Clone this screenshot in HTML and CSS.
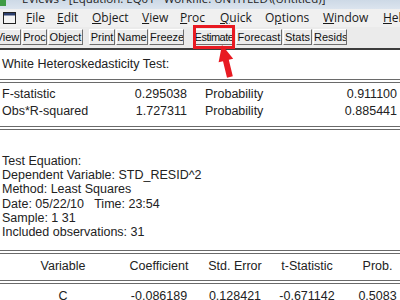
FILE: index.html
```html
<!DOCTYPE html>
<html>
<head>
<meta charset="utf-8">
<link rel="stylesheet" href="styles.css">
</head>
<body>
<div class="app">
  <div class="titlebar">
    <span class="appicon"></span>
    <span class="title">EViews - [Equation: EQ01 &nbsp; Workfile: UNTITLED\(Untitled)]</span>
  </div>
  <div class="menubar">
    <span class="sysicon"><svg width="13" height="12" viewBox="0 0 13 12"><rect x="0.5" y="0.5" width="12" height="11" fill="#f4f4f4" stroke="#222"/><rect x="1" y="1" width="11" height="2.5" fill="#2c3f6e"/></svg></span>
    <span><u>F</u>ile</span>
    <span><u>E</u>dit</span>
    <span><u>O</u>bject</span>
    <span><u>V</u>iew</span>
    <span><u>P</u>roc</span>
    <span><u>Q</u>uick</span>
    <span>O<u>p</u>tions</span>
    <span><u>W</u>indow</span>
    <span><u>H</u>elp</span>
  </div>
  <div class="toolbar">
    <div class="tgroup g1">
      <span class="btn b-view">View</span>
      <span class="btn b-proc">Proc</span>
      <span class="btn b-object">Object</span>
    </div>
    <div class="tgroup g2">
      <span class="btn b-print">Print</span>
      <span class="btn b-name">Name</span>
      <span class="btn b-freeze">Freeze</span>
    </div>
    <div class="tgroup g3">
      <span class="btn b-estimate">Estimate</span>
      <span class="btn b-forecast">Forecast</span>
      <span class="btn b-stats">Stats</span>
      <span class="btn b-resids">Resids</span>
    </div>
  </div>
  <div class="output">
    <div class="hdr">White Heteroskedasticity Test:</div>
    <div class="rule r1"></div>
    <div class="stats">
      <span>F-statistic</span><span class="num">0.295038</span><span></span><span>Probability</span><span class="num">0.911100</span>
      <span>Obs*R-squared</span><span class="num">1.727311</span><span></span><span>Probability</span><span class="num">0.885441</span>
    </div>
    <div class="rule r2"></div>
    <div class="info">
      <div>Test Equation:</div>
      <div>Dependent Variable: STD_RESID^2</div>
      <div>Method: Least Squares</div>
      <div>Date: 05/22/10 &nbsp; Time: 23:54</div>
      <div>Sample: 1 31</div>
      <div>Included observations: 31</div>
    </div>
    <div class="rule r3"></div>
    <div class="coef chead">
      <span>Variable</span><span>Coefficient</span><span>Std. Error</span><span>t-Statistic</span><span>Prob.</span>
    </div>
    <div class="rule r4"></div>
    <div class="coef crow">
      <span>C</span><span>-0.086189</span><span>0.128421</span><span>-0.671142</span><span>0.5083</span>
    </div>
  </div>
  <div class="redbox"></div>
  <svg class="arrow" width="400" height="300" viewBox="0 0 400 300"><polygon points="222,45 233.2,58.7 228.8,59.8 232.8,76.3 227,77.7 223,61.2 218.6,62.3" fill="#e81a22"/></svg>
</div>
</body>
</html>
```
FILE: styles.css
```css
* { box-sizing: border-box; }
html, body { margin: 0; padding: 0; background: #fff; }
body { width: 400px; height: 300px; overflow: hidden; }
.app { position: relative; width: 400px; height: 300px; overflow: hidden; background: #fff; }

.titlebar { height: 9px; display: flex; overflow: hidden; background: linear-gradient(#cdd9e6, #dbe4ee); }
.appicon { width: 6px; height: 6px; background: #3f9b45; flex: none; }
.title { margin-left: 16px; margin-top: -9px; font: 11.5px/16px "Open Sans", sans-serif; color: #222; white-space: nowrap; }

.menubar { height: 18px; display: grid; grid-template-columns: 26px 31px 35px 50px 38px 40px 45px 58px 60px auto; align-items: center; background: #f0f0f0; font: 12px/18px "Open Sans", sans-serif; color: #1a1a1a; white-space: nowrap; }
.sysicon { padding-left: 3px; display: flex; align-items: center; }

.toolbar { height: 23px; padding-top: 2px; display: flex; align-items: flex-start; background: #ebebeb; border-bottom: 2px solid #3d3d3d; }
.tgroup { display: flex; gap: 1px; }
.g1 { margin-left: -6px; }
.g2 { margin-left: 6px; }
.g3 { margin-left: 9px; }
.btn { height: 16px; border: 1px solid; border-color: #fff #6e6e6e #6e6e6e #fff; background: #ececec; font: 11px/14px "Liberation Sans", Arial, sans-serif; color: #111; text-align: center; white-space: nowrap; overflow: hidden; }
.b-view { width: 27px; }
.b-proc { width: 25px; }
.b-object { width: 35px; }
.b-print { width: 26px; }
.b-name { width: 32px; }
.b-freeze { width: 35px; }
.b-estimate { width: 42px; letter-spacing: -0.5px; overflow: visible; }
.b-forecast { width: 46px; }
.b-stats { width: 29px; }
.b-resids { width: 34px; }

.output { padding: 6px 0 0 2px; font: 12.5px "Liberation Sans", Arial, sans-serif; color: #222; }
.hdr { line-height: 16px; }
.rule { height: 4px; margin-left: -2px; border-top: 1px solid #6a6a6a; border-bottom: 1px solid #6a6a6a; }
.r1 { margin-top: 7px; }
.r2 { margin-top: 6px; }
.r3 { margin-top: 11px; }
.r4 { margin-top: 6.3px; }
.stats { margin-top: 3px; display: grid; grid-template-columns: 118px 67px 18px 110px 82px; line-height: 17px; }
.num { text-align: right; }
.info { margin-top: 24px; line-height: 14.2px; }
.coef { margin-left: -2px; display: grid; grid-template-columns: 126px 66px 86px 58px 83px; text-align: center; line-height: 16px; white-space: nowrap; }
.chead { margin-top: 3.5px; }
.crow { margin-top: 4px; }

.redbox { position: absolute; left: 193px; top: 25px; width: 42px; height: 24px; border: 3px solid #e81a22; }
.arrow { position: absolute; left: 0; top: 0; pointer-events: none; }
```
